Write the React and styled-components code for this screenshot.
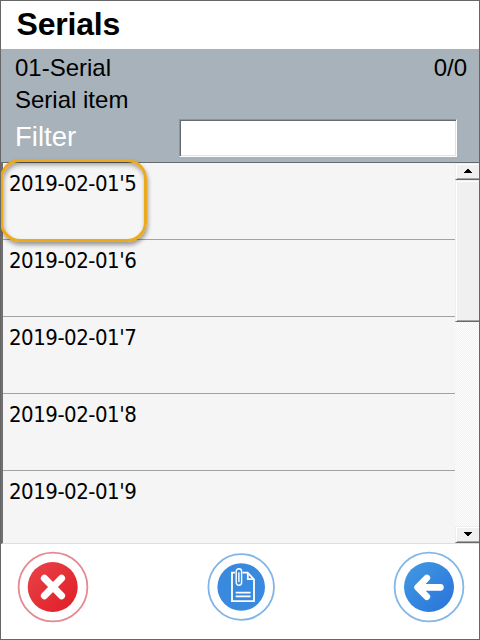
import React from 'react';
import styled, { createGlobalStyle } from 'styled-components';

const GlobalStyle = createGlobalStyle`
  *, *::before, *::after { box-sizing: border-box; }
  body { margin: 0; background: #fff; }
`;

const Window = styled.main`
  width: 480px;
  height: 640px;
  display: flex;
  flex-direction: column;
  border: 1px solid #666;
  background: #fff;
  color: #000;
  font-family: "Liberation Sans", Arial, sans-serif;
  overflow: hidden;
`;

const Title = styled.h1`
  margin: 0;
  flex: 0 0 48px;
  padding-left: 15.5px;
  font-size: 32px;
  line-height: 46px;
  letter-spacing: -0.2px;
`;

const Header = styled.section`
  flex: 0 0 113px;
  padding: 3px 12px 0 14px;
  background: #a7b2ba;
`;

const InfoRow = styled.div`
  display: flex;
  justify-content: space-between;
  height: 32px;
  font-size: 24px;
  line-height: 32px;
`;

const FilterRow = styled.label`
  display: flex;
  align-items: flex-start;
  padding-top: 3px;
`;

const FilterLabel = styled.span`
  width: 164px;
  color: #fff;
  font-size: 27.5px;
  line-height: 35px;
`;

const FilterInput = styled.input`
  width: 278px;
  height: 38px;
  padding: 0 6px;
  border: 1px solid;
  border-color: #8c959b #fff #fff #8c959b;
  border-radius: 0;
  outline: none;
  background: #fff;
  box-shadow: inset 1px 1px #666b6f, inset -1px -1px #dde3e6;
  font: 24px "Liberation Sans", Arial, sans-serif;
`;

const ListBox = styled.section`
  position: relative;
  flex: 0 0 382px;
  height: 382px;
  min-height: 0;
  display: flex;
  border: solid #707070;
  border-width: 1px 0 1px 2px;
  border-top-color: #666a6d;
  border-bottom-color: #dedede;
  background: #f5f5f5;
`;

const Rows = styled.ul`
  flex: 1;
  height: 380px;
  margin: 0;
  padding: 0;
  list-style: none;
  overflow: hidden;
`;

const Row = styled.li`
  height: 77px;
  padding: 5px 0 0 6px;
  border-bottom: 1px solid #a2a2a2;
  font-family: "DejaVu Sans Condensed", "DejaVu Sans", sans-serif;
  font-stretch: condensed;
  font-size: 22px;
  line-height: 32px;
  letter-spacing: -0.48px;
  white-space: nowrap;
`;

const Highlight = styled.div`
  position: absolute;
  left: -3px;
  top: -4px;
  width: 147px;
  height: 83px;
  border: 3px solid #eba91d;
  border-radius: 20px;
  box-shadow: 1px 3px 4px rgba(0, 0, 0, 0.38), inset 1px 3px 4px rgba(0, 0, 0, 0.34);
  pointer-events: none;
`;

const ScrollBar = styled.div`
  flex: 0 0 24px;
  display: flex;
  flex-direction: column;
  background: repeating-conic-gradient(#f0f0f0 0 25%, #fff 0 50%) 0 0 / 2px 2px;
`;

const ScrollPart = styled.div`
  height: ${(p) => p.$height}px;
  margin-top: ${(p) => p.$push || '0'};
  display: flex;
  align-items: center;
  justify-content: center;
  border: solid;
  border-width: 1px 0 1px 1px;
  border-color: #eee #999 #686868 #eee;
  background: #f0f0f0;
  box-shadow: inset 1px 1px #fff, inset 0 -1px #a5a5a5;
`;

const Footer = styled.footer`
  flex: 1;
  display: flex;
  align-items: flex-start;
  justify-content: space-between;
  padding: 7px 14px 0 16px;
`;

const RoundButton = styled.button`
  width: 72px;
  height: 72px;
  padding: 0;
  border: 0;
  background: none;
  svg { display: block; }
`;

const serials = ["2019-02-01'5", "2019-02-01'6", "2019-02-01'7", "2019-02-01'8", "2019-02-01'9"];

function Arrow({ down }) {
  return (
    <svg width="9" height="5" viewBox="0 0 9 5" shapeRendering="crispEdges">
      <path d={down ? 'M1 0h8v1h-1v1h-1v1h-1v1h-2v-1h-1v-1h-1v-1h-1z' : 'M4 0h2v1h1v1h1v1h1v1h-8v-1h1v-1h1v-1h1z'} />
    </svg>
  );
}

function CancelIcon() {
  return (
    <svg width="72" height="72" viewBox="0 0 72 72" fill="none">
      <defs>
        <linearGradient id="red" x1="0" y1="0" x2="1" y2="1">
          <stop stopColor="#e94449" />
          <stop offset="1" stopColor="#df1c26" />
        </linearGradient>
      </defs>
      <circle cx="36" cy="36" r="34.4" stroke="#e58a91" strokeWidth="1.8" />
      <circle cx="35.7" cy="36" r="25" fill="url(#red)" />
      <path d="M27.4 27.2 44.6 44.8M44.6 27.2 27.4 44.8" stroke="#fff" strokeWidth="7" strokeLinecap="round" />
    </svg>
  );
}

function AttachIcon() {
  return (
    <svg width="72" height="72" viewBox="0 0 72 72" fill="none">
      <circle cx="36.2" cy="36" r="32.8" stroke="#82b4e6" strokeWidth="1.8" />
      <circle cx="36.2" cy="36" r="23.8" fill="#398ade" />
      <g stroke="#fff" strokeWidth="1.8">
        <path d="M30 21.7H27V50.2H49V28.3L42.6 21.7H37.5" />
        <path d="M42.8 22V28.2H49" />
        <path d="M30.7 41.6H45.6M30.7 45.4H45.6" />
        <path d="M36.6 29V20.5a2.7 2.7 0 0 0-5.4 0V31.5a2.7 2.7 0 0 0 5.4 0V24" strokeWidth="1.4" />
        <path d="M33.9 22V30.5" strokeWidth="1.4" strokeLinecap="round" />
      </g>
    </svg>
  );
}

function BackIcon() {
  return (
    <svg width="72" height="72" viewBox="0 0 72 72" fill="none">
      <defs>
        <linearGradient id="blue" x1="0" y1="0" x2="1" y2="1">
          <stop stopColor="#419be3" />
          <stop offset="1" stopColor="#2972d9" />
        </linearGradient>
      </defs>
      <circle cx="36" cy="36" r="34.4" stroke="#82b7e8" strokeWidth="1.8" />
      <circle cx="36" cy="36" r="25" fill="url(#blue)" />
      <path d="M33.8 27 24.6 36.3 33.8 45.6M25.5 36.3H47.4" stroke="#fff" strokeWidth="6.7" strokeLinecap="round" strokeLinejoin="round" />
    </svg>
  );
}

export default function App() {
  return (
    <>
      <GlobalStyle />
      <Window>
        <Title>Serials</Title>
        <Header>
          <InfoRow><span>01-Serial</span><span>0/0</span></InfoRow>
          <InfoRow>Serial item</InfoRow>
          <FilterRow>
            <FilterLabel>Filter</FilterLabel>
            <FilterInput />
          </FilterRow>
        </Header>
        <ListBox>
          <Rows>{serials.map((s) => <Row key={s}>{s}</Row>)}</Rows>
          <ScrollBar>
            <ScrollPart $height={17}><Arrow /></ScrollPart>
            <ScrollPart $height={142} />
            <ScrollPart $height={17} $push="auto"><Arrow down /></ScrollPart>
          </ScrollBar>
          <Highlight />
        </ListBox>
        <Footer>
          <RoundButton aria-label="Cancel"><CancelIcon /></RoundButton>
          <RoundButton aria-label="Attachments"><AttachIcon /></RoundButton>
          <RoundButton aria-label="Back"><BackIcon /></RoundButton>
        </Footer>
      </Window>
    </>
  );
}
